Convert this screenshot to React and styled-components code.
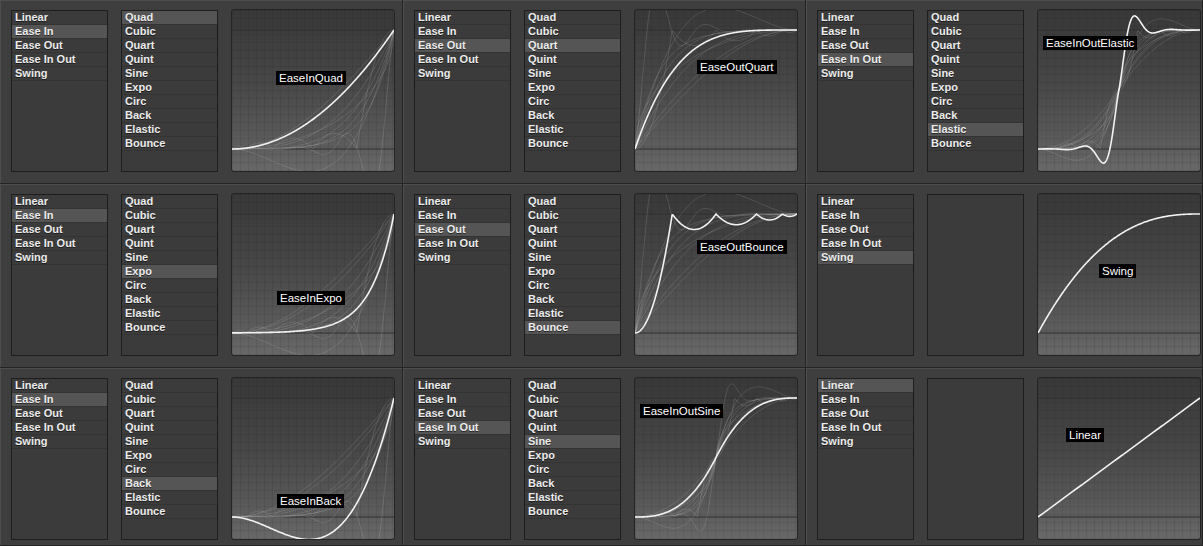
import React from "react";
import styled, { createGlobalStyle } from "styled-components";

const GlobalStyle = createGlobalStyle`
  html, body {
    margin: 0;
    padding: 0;
    background: #3d3d3d;
  }
  body {
    width: 1203px;
    height: 546px;
    overflow: hidden;
    font-family: "Liberation Sans", Arial, sans-serif;
  }
`;

// bounce: first hit early, then a row of shallow hops
const HOPS = [
  [0.23, 0.5, 0.13],
  [0.5, 0.75, 0.09],
  [0.75, 0.91, 0.05],
  [0.91, 1, 0.02],
];
const bounceOut = (t) => {
  if (t < HOPS[0][0]) return (t / HOPS[0][0]) ** 2;
  for (const [a, b, h] of HOPS) {
    if (t <= b) {
      const u = (2 * t - a - b) / (b - a);
      return 1 - h * (1 - u * u);
    }
  }
  return 1;
};

const elasticIn = (p) => (t) => {
  if (t === 0 || t === 1) return t;
  const s = p / 4;
  return -(Math.pow(2, 10 * (t - 1)) * Math.sin(((t - 1 - s) * 2 * Math.PI) / p));
};

const easeIn = {
  Quad: (t) => t * t,
  Cubic: (t) => t * t * t,
  Quart: (t) => t ** 4,
  Quint: (t) => t ** 5,
  Sine: (t) => 1 - Math.cos((t * Math.PI) / 2),
  Expo: (t) => (t === 0 ? 0 : Math.pow(2, 10 * (t - 1))),
  Circ: (t) => 1 - Math.sqrt(1 - t * t),
  Back: (t) => t * t * (3.5 * t - 2.5),
  Elastic: elasticIn(0.3),
  Bounce: (t) => 1 - bounceOut(1 - t),
};

const inOutElastic = elasticIn(0.45);
// the tool draws its in-out sine a good deal steeper than the textbook one
const inOutSine = (t) => Math.pow(t, 2.7);

const makeCurve = (mode, name) => {
  if (mode === "Linear") return (t) => t;
  if (mode === "Swing") return (t) => 1 - Math.pow(1 - t, 2.5);
  const f = easeIn[name];
  if (mode === "In") return f;
  if (mode === "Out") return (t) => 1 - f(1 - t);
  const g = name === "Elastic" ? inOutElastic : name === "Sine" ? inOutSine : f;
  return (t) => (t < 0.5 ? g(2 * t) / 2 : 1 - g(2 - 2 * t) / 2);
};

const GW = 162;
const TOP = 20;
const UNIT = 119;

const pathFor = (fn) => {
  let d = "";
  for (let i = 0; i <= 240; i++) {
    const t = i / 240;
    const x = t * GW;
    const y = TOP + (1 - fn(t)) * UNIT;
    d += `${i ? "L" : "M"}${x.toFixed(2)} ${y.toFixed(2)}`;
  }
  return d;
};

const MODES = ["Linear", "Ease In", "Ease Out", "Ease In Out", "Swing"];
const MODE_KEYS = { "Ease In": "In", "Ease Out": "Out", "Ease In Out": "InOut" };
const TYPES = ["Quad", "Cubic", "Quart", "Quint", "Sine", "Expo", "Circ", "Back", "Elastic", "Bounce"];

const panels = [
  { mode: "Ease In", type: "Quad", label: "EaseInQuad", lx: 44, ly: 61 },
  { mode: "Ease Out", type: "Quart", label: "EaseOutQuart", lx: 62, ly: 50 },
  { mode: "Ease In Out", type: "Elastic", label: "EaseInOutElastic", lx: 5, ly: 26 },
  { mode: "Ease In", type: "Expo", label: "EaseInExpo", lx: 45, ly: 97 },
  { mode: "Ease Out", type: "Bounce", label: "EaseOutBounce", lx: 62, ly: 46 },
  { mode: "Swing", label: "Swing", lx: 61, ly: 70 },
  { mode: "Ease In", type: "Back", label: "EaseInBack", lx: 45, ly: 116 },
  { mode: "Ease In Out", type: "Sine", label: "EaseInOutSine", lx: 5, ly: 26 },
  { mode: "Linear", label: "Linear", lx: 28, ly: 50 },
];

const Board = styled.div`
  display: grid;
  grid-template-columns: 403px 403px 397px;
  grid-template-rows: 184px 184px 178px;
  width: 1203px;
  height: 546px;
  overflow: hidden;
`;

const Panel = styled.div`
  box-sizing: border-box;
  display: flex;
  align-items: flex-start;
  gap: 13px;
  padding: 9px 0 0 11px;
  background: #3e3e3e;
  border-right: 1px solid #242424;
  border-bottom: 1px solid #242424;
  box-shadow: inset 1px 1px 0 #4e4e4e;
  overflow: hidden;
`;

const List = styled.ul`
  box-sizing: border-box;
  flex: 0 0 97px;
  height: 162px;
  margin: 1px 0 0;
  padding: 0;
  list-style: none;
  background: #3b3b3b;
  border: 1px solid #1e1e1e;
`;

const Item = styled.li`
  height: 13px;
  padding-left: 3px;
  border-bottom: 1px solid #333333;
  background: ${(p) => (p.$active ? "#555555" : "transparent")};
  color: #ececec;
  font-size: 11px;
  font-weight: bold;
  line-height: 13px;
  text-shadow: 0 1px 0 rgba(0, 0, 0, 0.55);
  white-space: nowrap;
`;

const Graph = styled.div`
  position: relative;
  box-sizing: border-box;
  flex: 0 0 164px;
  height: 163px;
  border: 1px solid #242424;
  border-radius: 3px;
  overflow: hidden;
  background-color: #4a4a4a;
  background-image: linear-gradient(rgba(0, 0, 0, 0.07) 1px, transparent 1px),
    linear-gradient(90deg, rgba(0, 0, 0, 0.07) 1px, transparent 1px),
    linear-gradient(#383838 0%, #474747 45%, #5d5d5d 85%, #686868 100%);
  background-size: 8px 8px, 8px 8px, 100% 100%;
`;

const Plot = styled.svg`
  position: absolute;
  left: 0;
  top: 0;
  display: block;
`;

const Label = styled.div`
  position: absolute;
  height: 14px;
  padding: 0 3px;
  background: #000000;
  color: #ffffff;
  font-size: 11.5px;
  line-height: 14px;
  white-space: nowrap;
`;

const EasePanel = ({ mode, type, label, lx, ly }) => {
  const key = MODE_KEYS[mode] || mode;
  const main = makeCurve(key, type);
  const ghosts = type ? TYPES.filter((t) => t !== type).map((t) => makeCurve(key, t)) : [];
  return (
    <Panel>
      <List>
        {MODES.map((m) => (
          <Item key={m} $active={m === mode}>
            {m}
          </Item>
        ))}
      </List>
      <List>
        {type &&
          TYPES.map((t) => (
            <Item key={t} $active={t === type}>
              {t}
            </Item>
          ))}
      </List>
      <Graph>
        <Plot width="162" height="161" viewBox="0 0 162 161">
          <line x1="0" x2="162" y1={TOP} y2={TOP} stroke="#2e2e2e" strokeWidth="1" />
          <line x1="0" x2="162" y1={TOP + UNIT} y2={TOP + UNIT} stroke="#2e2e2e" strokeWidth="1" />
          {ghosts.map((g, i) => (
            <path key={i} d={pathFor(g)} fill="none" stroke="rgba(255,255,255,0.13)" strokeWidth="1" />
          ))}
          <path d={pathFor(main)} fill="none" stroke="#f2f2f2" strokeWidth="1.6" />
        </Plot>
        <Label style={{ left: lx, top: ly }}>{label}</Label>
      </Graph>
    </Panel>
  );
};

export default function App() {
  return (
    <>
      <GlobalStyle />
      <Board>
        {panels.map((p, i) => (
          <EasePanel key={i} {...p} />
        ))}
      </Board>
    </>
  );
}
